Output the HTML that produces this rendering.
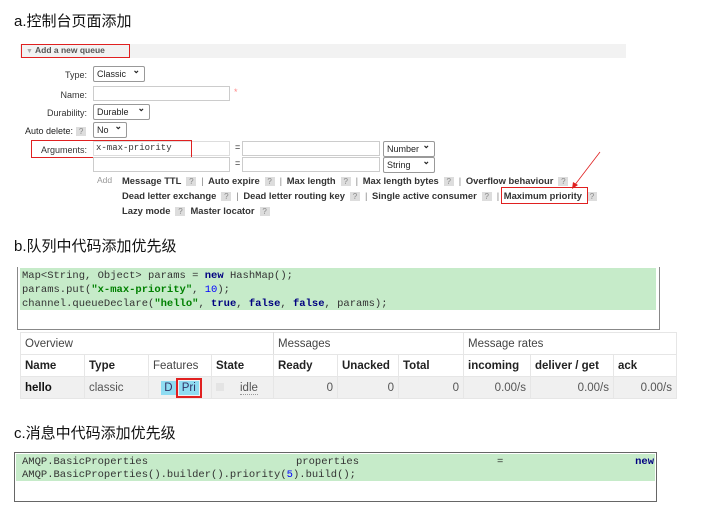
<!DOCTYPE html>
<html><head><meta charset="utf-8"><style>
*{margin:0;padding:0;box-sizing:border-box}
body{width:703px;height:510px;background:#fff;position:relative;overflow:hidden;font-family:"Liberation Sans","Noto Sans CJK SC",sans-serif;color:#222}
.a{position:absolute;white-space:nowrap}
.h{font-size:15px;color:#111}
.lbl{font-size:9px;color:#333;text-align:right;width:70px}
.sel{border:1px solid #999;border-radius:2px;font-size:9px;padding:1px 3px;height:16px;line-height:13px;background:#fff}
.sel:after{content:"⌄";position:absolute;right:4px;top:-3px;font-weight:bold}
.inp{border:1px solid #ccc;height:15px;background:#fff}
.lk{font-size:9.4px;font-weight:bold;color:#333}
.q{display:inline-block;background:#ddd;color:#888;font-size:8px;width:10px;text-align:center;margin:0 5px;font-weight:normal}
.sep{color:#888;font-weight:normal;margin-right:2px}
.red{border:1.5px solid #e02020}
.code{font-family:"Liberation Mono",monospace;font-size:10.5px;color:#333}
.kw{color:#000080;font-weight:bold}
.st{color:#008000;font-weight:bold}
.nu{color:#0000ff}
table{border-collapse:collapse;font-size:11.5px}
td{border:1px solid #e6e6e6;padding:0 4px;height:22px}
</style></head><body>
<div class="a h" style="left:14px;top:10px">a.控制台页面添加</div>
<div class="a" style="left:20px;top:44px;width:606px;height:14px;background:#f2f2f2"></div>
<div class="a red" style="left:21px;top:44px;width:109px;height:14px"></div>
<div class="a" style="left:26px;top:45px;font-size:8.5px;font-weight:bold;color:#555"><span style="color:#aaa;font-size:7px">▼</span> Add a new queue</div>

<div class="a lbl" style="left:17px;top:70px">Type:</div>
<div class="a sel" style="left:93px;top:66px;width:52px">Classic</div>
<div class="a lbl" style="left:17px;top:90px">Name:</div>
<div class="a inp" style="left:93px;top:86px;width:137px"></div>
<div class="a" style="left:234px;top:87px;color:#f88;font-size:9px">*</div>
<div class="a lbl" style="left:17px;top:108px">Durability:</div>
<div class="a sel" style="left:93px;top:104px;width:57px">Durable</div>
<div class="a" style="left:25px;top:126px;font-size:9px">Auto delete:<span class="q" style="margin:0 3px">?</span></div>
<div class="a sel" style="left:93px;top:122px;width:34px">No</div>
<div class="a lbl" style="left:17px;top:145px">Arguments:</div>
<div class="a inp code" style="left:93px;top:141px;width:137px;font-size:9px;padding-left:2px;border-color:#ddd;line-height:13px">x-max-priority</div>
<div class="a red" style="left:31px;top:140px;width:161px;height:18px"></div>
<div class="a" style="left:235px;top:142px;font-size:9px">=</div>
<div class="a inp" style="left:242px;top:141px;width:138px"></div>
<div class="a sel" style="left:383px;top:141px;width:52px">Number</div>
<div class="a inp" style="left:93px;top:157px;width:137px"></div>
<div class="a" style="left:235px;top:158px;font-size:9px">=</div>
<div class="a inp" style="left:242px;top:157px;width:138px"></div>
<div class="a sel" style="left:383px;top:157px;width:52px">String</div>
<div class="a" style="left:97px;top:175px;font-size:8.5px;color:#999">Add</div>
<div class="a lk" style="left:122px;top:175px">Message TTL<span class="q">?</span><span class="sep">|</span> Auto expire<span class="q">?</span><span class="sep">|</span> Max length<span class="q">?</span><span class="sep">|</span> Max length bytes<span class="q">?</span><span class="sep">|</span> Overflow behaviour<span class="q">?</span></div>
<div class="a lk" style="left:122px;top:190px">Dead letter exchange<span class="q">?</span><span class="sep">|</span> Dead letter routing key<span class="q">?</span><span class="sep">|</span> Single active consumer<span class="q">?</span><span class="sep">|</span> Maximum priority<span class="q">?</span></div>
<div class="a lk" style="left:122px;top:205px">Lazy mode<span class="q">?</span>Master locator<span class="q">?</span></div>
<div class="a red" style="left:501px;top:187px;width:87px;height:17px"></div>
<svg class="a" style="left:560px;top:150px" width="50" height="45"><line x1="40" y1="2" x2="14" y2="36" stroke="#e02020" stroke-width="0.8"/><path d="M12 39 L13 32 L18 35Z" fill="#e02020"/></svg>

<div class="a h" style="left:14px;top:235px">b.队列中代码添加优先级</div>
<div class="a" style="left:17px;top:267px;width:643px;height:63px;border:1px solid #888;border-top:none"></div>
<div class="a" style="left:20px;top:268px;width:636px;height:42px;background:#c6ebc9"></div>
<div class="a code" style="left:22px;top:269px;line-height:14px">Map&lt;String, Object&gt; params = <span class="kw">new</span> HashMap();<br>params.put(<span class="st">"x-max-priority"</span>, <span class="nu">10</span>);<br>channel.queueDeclare(<span class="st">"hello"</span>, <span class="kw">true</span>, <span class="kw">false</span>, <span class="kw">false</span>, params);</div>

<table class="a" style="left:20px;top:332px;width:657px">
<tr style="color:#444"><td colspan="4" style="border-right:1px solid #ddd">Overview</td><td colspan="3">Messages</td><td colspan="3">Message rates</td></tr>
<tr style="font-weight:bold"><td style="width:64px">Name</td><td style="width:64px">Type</td><td style="width:63px;font-weight:normal;color:#444">Features</td><td style="width:62px">State</td><td style="width:64px">Ready</td><td style="width:61px">Unacked</td><td style="width:65px">Total</td><td style="width:67px">incoming</td><td style="width:83px">deliver / get</td><td>ack</td></tr>
<tr style="background:#f0f0f0;color:#555"><td style="font-weight:bold;color:#111">hello</td><td>classic</td><td style="text-align:center"><span style="background:#8fdcf2;padding:1px 3px;color:#336">D</span> <span style="background:#8fdcf2;padding:1px 3px;color:#336;outline:2px solid #e02020;outline-offset:1px">Pri</span></td><td><span style="display:inline-block;width:8px;height:8px;background:#e4e4e4;margin-right:16px"></span><span style="border-bottom:1px dotted #999">idle</span></td><td style="text-align:right">0</td><td style="text-align:right">0</td><td style="text-align:right">0</td><td style="text-align:right">0.00/s</td><td style="text-align:right">0.00/s</td><td style="text-align:right">0.00/s</td></tr>
</table>

<div class="a h" style="left:14px;top:422px">c.消息中代码添加优先级</div>
<div class="a" style="left:14px;top:452px;width:643px;height:50px;border:1px solid #666"></div>
<div class="a" style="left:16px;top:454px;width:639px;height:27px;background:#c6ebc9"></div>
<div class="a code" style="left:22px;top:456px;line-height:13px;width:632px">AMQP.BasicProperties<span style="position:absolute;left:274px">properties</span><span style="position:absolute;left:475px">=</span><span class="kw" style="position:absolute;right:0">new</span><br>AMQP.BasicProperties().builder().priority(<span class="nu">5</span>).build();</div>
</body></html>
